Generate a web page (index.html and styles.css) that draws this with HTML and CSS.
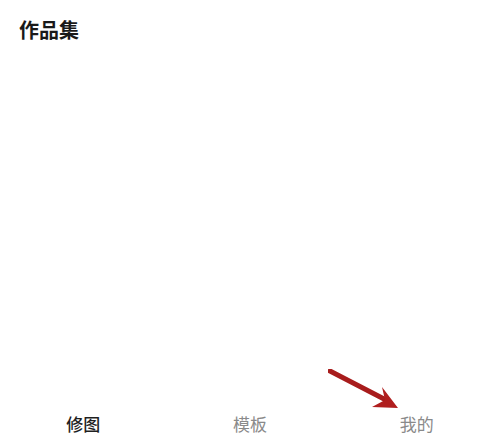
FILE: index.html
```html
<!DOCTYPE html>
<html lang="zh">
<head>
<meta charset="utf-8">
<link rel="stylesheet" href="styles.css">
</head>
<body>
<div class="page">
  <header class="title">作品集</header>
  <main class="content"></main>
  <nav class="tabbar">
    <div class="tab active">修图</div>
    <div class="tab">模板</div>
    <div class="tab mine">我的
      <svg class="arrow" width="80" height="45" viewBox="0 0 80 45">
        <line x1="2" y1="2" x2="58" y2="31" stroke="#a81c1c" stroke-width="5" stroke-linecap="round"/>
        <polygon points="70,39 44,38 57,31 54,18" fill="#b01e1e"/>
      </svg>
    </div>
  </nav>
</div>
</body>
</html>
```
FILE: styles.css
```css
html, body {
  margin: 0;
  padding: 0;
  background: #fff;
}
.page {
  width: 500px;
  height: 440px;
  display: flex;
  flex-direction: column;
  font-family: "Noto Sans CJK SC", "Noto Sans", sans-serif;
}
.title {
  padding: 16px 0 0 19px;
  font-size: 20px;
  line-height: 28px;
  font-weight: 700;
  color: #1a1a1a;
}
.content {
  flex: 1;
}
.tabbar {
  display: grid;
  grid-template-columns: 1fr 1fr 1fr;
  height: 36px;
  padding-top: 4px;
}
.tab {
  text-align: center;
  font-size: 17px;
  line-height: 40px;
  font-weight: 400;
  color: #8a8a8a;
}
.tab.active {
  color: #1f1f1f;
  font-weight: 500;
}
.mine {
  position: relative;
}
.arrow {
  position: absolute;
  left: -5px;
  top: -35px;
}
```
